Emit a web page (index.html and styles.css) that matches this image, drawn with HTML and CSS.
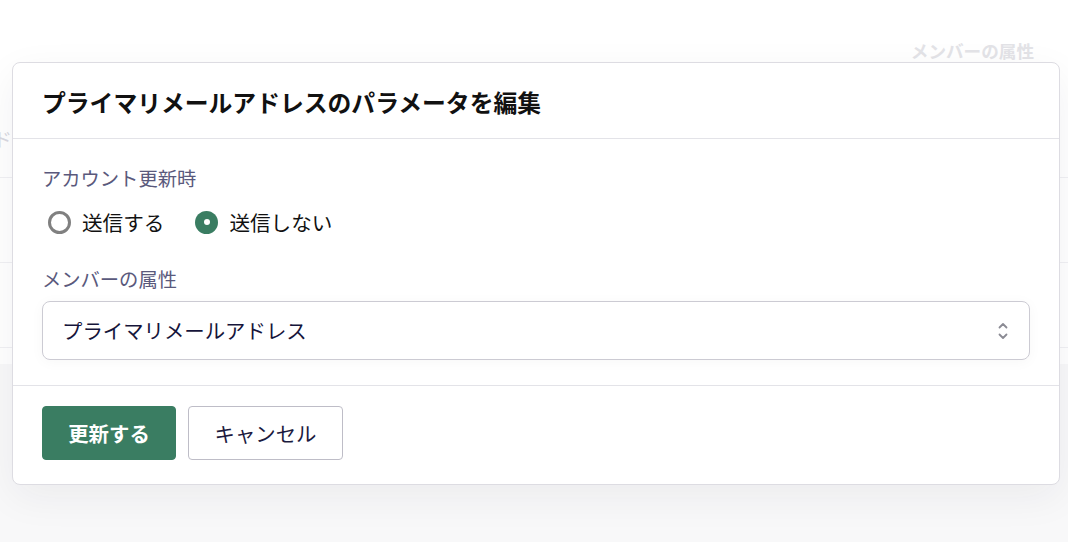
FILE: index.html
```html
<!DOCTYPE html>
<html lang="ja">
<head>
<meta charset="utf-8">
<title>プライマリメールアドレスのパラメータを編集</title>
<link rel="stylesheet" href="styles.css">
</head>
<body>
<div class="page">
  <div class="page-top"><span class="page-attr">メンバーの属性</span></div>
  <div class="page-table">
    <div class="page-row page-row-head"><span class="cut">ド</span></div>
    <div class="page-row"></div>
    <div class="page-row"></div>
  </div>
  <div class="page-foot"></div>
</div>

<div class="overlay">
  <div class="modal">
    <div class="modal-header">
      <h2 class="modal-title">プライマリメールアドレスのパラメータを編集</h2>
    </div>
    <div class="modal-body">
      <div class="field-label">アカウント更新時</div>
      <div class="radio-row">
        <label class="radio"><span class="radio-dot"></span><span class="radio-text">送信する</span></label>
        <label class="radio"><span class="radio-dot is-checked"></span><span class="radio-text">送信しない</span></label>
      </div>
      <div class="field-label field-label-2">メンバーの属性</div>
      <div class="select">
        <span class="select-value">プライマリメールアドレス</span>
        <svg class="select-arrows" width="12" height="20" viewBox="0 0 12 20" fill="none" stroke="#8b8b94" stroke-width="1.8" stroke-linecap="round" stroke-linejoin="round">
          <path d="M2.5 6.5 L6 3 L9.5 6.5"/>
          <path d="M2.5 13.5 L6 17 L9.5 13.5"/>
        </svg>
      </div>
    </div>
    <div class="modal-footer">
      <button class="btn btn-primary">更新する</button>
      <button class="btn btn-secondary">キャンセル</button>
    </div>
  </div>
</div>
</body>
</html>
```

FILE: styles.css
```css
* { box-sizing: border-box; }

html, body {
  margin: 0;
  padding: 0;
  background: #ffffff;
  font-family: "Noto Sans CJK JP", "Noto Sans", sans-serif;
}

body {
  width: 1068px;
  height: 542px;
  overflow: hidden;
  position: relative;
}

/* faint background page */
.page {
  width: 1068px;
  height: 542px;
  display: flex;
  flex-direction: column;
}

.page-top {
  height: 100px;
  display: flex;
  justify-content: flex-end;
  align-items: center;
  padding-right: 34px;
}

.page-attr {
  font-size: 17.6px;
  font-weight: 700;
  color: #e3e3e7;
}

.page-table {
  display: flex;
  flex-direction: column;
}

.page-row {
  height: 85px;
  border-bottom: 1px solid #f0f0f3;
}

.page-row-head {
  height: 78px;
  display: flex;
  align-items: center;
}

.cut {
  margin-left: -7px;
  font-size: 19px;
  color: #d9d9e1;
}

.page-foot {
  margin-top: 16px;
  flex: 1;
  background: #f8f8f9;
}

/* overlay + modal */
.overlay {
  position: absolute;
  inset: 0;
  padding: 62px 8px 0 12px;
}

.modal {
  width: 1048px;
  background: #ffffff;
  border: 1px solid #dddce2;
  border-radius: 8px;
  box-shadow: 0 12px 40px rgba(30, 30, 50, 0.06);
}

.modal-header {
  height: 76px;
  padding: 0 29px;
  display: flex;
  align-items: center;
  border-bottom: 1px solid #e3e3e8;
}

.modal-title {
  margin: 0;
  font-size: 23.8px;
  font-weight: 700;
  color: #111111;
  line-height: 1;
  padding-top: 2px;
}

.modal-body {
  padding: 25px 29px 25px;
  border-bottom: 1px solid #e3e3e8;
  display: flex;
  flex-direction: column;
}

.field-label {
  font-size: 19.3px;
  line-height: 28px;
  color: #5a597c;
}

.field-label-2 {
  margin-top: 28px;
}

.radio-row {
  margin-top: 15px;
  height: 30px;
  display: flex;
  align-items: center;
  gap: 31px;
  padding-left: 6px;
}

.radio {
  display: flex;
  align-items: center;
  gap: 11px;
}

.radio-dot {
  width: 23px;
  height: 23px;
  border-radius: 50%;
  border: 3px solid #808080;
  background: #fff;
  display: flex;
  align-items: center;
  justify-content: center;
}

.radio-dot.is-checked {
  border: none;
  background: #3a7d62;
}

.radio-dot.is-checked::after {
  content: "";
  width: 6px;
  height: 6px;
  border-radius: 50%;
  background: #ffffff;
}

.radio-text {
  font-size: 20.6px;
  color: #111111;
  line-height: 30px;
}

.select {
  margin-top: 8px;
  height: 59px;
  border: 1px solid #cccbd3;
  border-radius: 8px;
  padding: 0 20px 0 19px;
  display: flex;
  align-items: center;
  justify-content: space-between;
  box-shadow: 0 2px 14px rgba(0, 0, 0, 0.035);
}

.select-value {
  font-size: 20.4px;
  color: #15143a;
  line-height: 1;
  font-weight: 400;
}

.modal-footer {
  padding: 20px 29px 24px;
  display: flex;
  gap: 12px;
}

.btn {
  height: 54px;
  border-radius: 4px;
  font-family: "Noto Sans CJK JP", "Noto Sans", sans-serif;
  font-size: 20.4px;
  line-height: 1;
  cursor: pointer;
}

.btn-primary {
  width: 134px;
  background: #3a7d62;
  border: 1px solid #3a7d62;
  color: #ffffff;
  font-weight: 700;
}

.btn-secondary {
  width: 155px;
  background: #ffffff;
  border: 1px solid #bebdc7;
  color: #1b1a3e;
  font-weight: 400;
}
```
